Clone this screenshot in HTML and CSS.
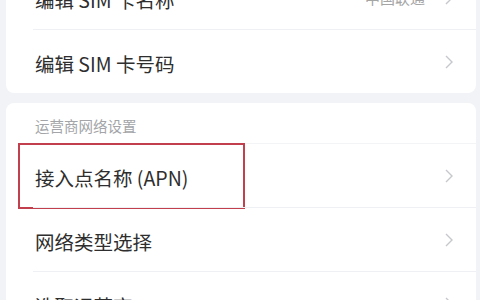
FILE: index.html
```html
<!DOCTYPE html>
<html lang="zh-CN">
<head>
  <meta charset="UTF-8" />
  <meta name="viewport" content="width=device-width, initial-scale=1.0"/>
  <title>SIM 卡设置</title>
  <link rel="stylesheet" href="styles.css">
</head>
<body>

  <div class="page">

    <div class="card">
      <div class="row">
        <div class="row-inner">
          <span class="label">编辑 SIM 卡名称</span>
          <span class="value">中国联通</span>
          <svg class="arrow" viewBox="0 0 8 14"><path d="M1 1l6 6-6 6" /></svg>
        </div>
      </div>
      <div class="row">
        <div class="row-inner">
          <span class="label">编辑 SIM 卡号码</span>
          <svg class="arrow" viewBox="0 0 8 14"><path d="M1 1l6 6-6 6" /></svg>
        </div>
      </div>
    </div>

    <div class="card">
      <div class="section-title">运营商网络设置</div>
      <div class="row marked">
        <div class="row-inner">
          <span class="label">接入点名称 (APN)</span>
          <svg class="arrow" viewBox="0 0 8 14"><path d="M1 1l6 6-6 6" /></svg>
        </div>
        <div class="highlight"></div>
      </div>
      <div class="row">
        <div class="row-inner">
          <span class="label">网络类型选择</span>
          <svg class="arrow" viewBox="0 0 8 14"><path d="M1 1l6 6-6 6" /></svg>
        </div>
      </div>
      <div class="row">
        <div class="row-inner">
          <span class="label">选取运营商</span>
          <svg class="arrow" viewBox="0 0 8 14"><path d="M1 1l6 6-6 6" /></svg>
        </div>
      </div>
    </div>

  </div>

</body>
</html>
```

FILE: styles.css
```css
* {
  margin: 0;
  padding: 0;
  box-sizing: border-box;
}

body {
  background: #f1f3f7;
  font-family: "Noto Sans CJK SC", "Noto Sans", sans-serif;
  width: 480px;
  height: 300px;
  overflow: hidden;
}

.page {
  margin-top: -35px;
  padding: 0 4px 0 6px;
  display: flex;
  flex-direction: column;
  gap: 10px;
}

.card {
  background: #fff;
  border-radius: 8px;
}

.row {
  position: relative;
  padding-left: 27px;
}

.row-inner {
  height: 64px;
  display: flex;
  align-items: center;
  padding-right: 23px;
  border-top: 1px solid #eef0f3;
}

.card .row:first-child .row-inner,
.section-title + .row .row-inner {
  border-top-color: #f3f4f6;
}

.label {
  flex: 1;
  font-size: 19.5px;
  color: #2e2e2e;
  padding: 3px 0 0 2px;
}

.value {
  font-size: 15px;
  color: #a5a5a5;
  margin-right: 20px;
}

.arrow {
  width: 8px;
  height: 14px;
  fill: none;
  stroke: #c6c8cc;
  stroke-width: 1.4;
}

.section-title {
  height: 40px;
  display: flex;
  align-items: center;
  padding: 4px 0 0 29px;
  font-size: 14.5px;
  color: #a3a5a8;
}

.highlight {
  position: absolute;
  left: 12px;
  top: 0;
  width: 227px;
  height: 66px;
  border: 2px solid #c2404e;
}
```
